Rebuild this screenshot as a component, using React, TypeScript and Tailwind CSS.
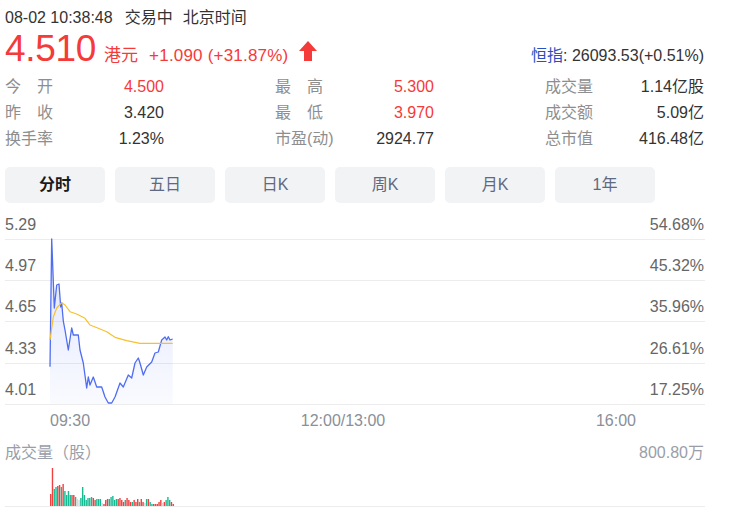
import React from "react";

const RED = "#f53a3a";

const blue: [number, number][] = [
  [50, 366.7], [51.7, 239], [54.3, 308], [56.7, 285], [59, 284], [60.7, 307], [61.7, 303],
  [63.3, 321], [65, 330], [68.3, 350], [71.7, 328], [73.3, 335], [78.3, 335], [80, 350],
  [83.3, 363], [86.7, 388], [88.3, 377], [90, 385], [93.3, 377], [96.7, 387], [101.7, 387],
  [105, 397], [108.3, 403], [111.7, 403], [115, 397], [120, 383], [123.3, 387], [128.3, 375],
  [131.7, 378], [135, 363], [138.3, 358], [140, 363], [143.3, 375], [146.7, 367], [151.7, 362],
  [155, 353], [158.3, 352], [161.7, 340], [165, 337], [166.7, 340], [168.3, 336.7], [170, 340],
  [172.7, 339],
];

const avg: [number, number][] = [
  [50, 340], [53.3, 317], [56.7, 308], [61.7, 302.7], [65, 305], [70, 311.7], [76.7, 314],
  [85, 318.3], [90, 325], [98.3, 328.3], [106.7, 331.7], [115, 337.3], [126.7, 340.7],
  [140, 343.3], [172.7, 343.3],
];

// [height, color] r=red g=green x=gray
const vols: [number, string][] = [
  [12, "r"], [38, "r"], [17, "g"], [19, "g"], [20, "r"], [21, "r"], [19, "g"], [22, "r"],
  [15, "g"], [11, "g"], [15, "g"], [11, "g"], [11, "r"], [11, "r"], [9, "g"], [7, "x"],
  [6, "x"], [8, "g"], [19, "g"], [11, "g"], [6, "g"], [8, "g"], [8, "g"], [9, "g"], [8, "r"],
  [6, "r"], [7, "g"], [7, "g"], [7, "g"], [3, "x"], [2, "r"], [6, "r"], [7, "r"], [7, "g"],
  [9, "g"], [10, "g"], [6, "g"], [7, "g"], [7, "r"], [8, "r"], [6, "r"], [4, "r"], [6, "g"],
  [8, "r"], [6, "r"], [4, "r"], [4, "g"], [6, "r"], [4, "r"], [7, "r"], [4, "g"], [7, "r"],
  [4, "r"], [3, "x"], [7, "g"], [7, "r"], [4, "g"], [2, "g"], [2, "r"], [2, "r"], [2, "r"],
  [4, "r"], [6, "r"], [3, "x"], [4, "r"], [6, "g"], [9, "g"], [6, "g"], [4, "r"], [2, "r"],
];

const colorOf = (c: string) => (c === "r" ? "#f23f3f" : c === "g" ? "#17bb93" : "#d8d8d8");

function Justified({ text }: { text: string }) {
  return (
    <span className="flex w-[48px] justify-between text-[#8e8e8e]">
      {text.split("").map((ch, i) => (
        <span key={i}>{ch}</span>
      ))}
    </span>
  );
}

function Stat({ label, value, red, justify }: { label: string; value: string; red?: boolean; justify?: boolean }) {
  return (
    <div className="flex h-[26px] w-[159px] items-center justify-between">
      {justify ? <Justified text={label} /> : <span className="text-[#8e8e8e]">{label}</span>}
      <span className={red ? "text-[#f53a3a]" : "text-[#333333]"}>{value}</span>
    </div>
  );
}

export default function App() {
  const pts = (a: [number, number][]) => a.map((p) => p.join(",")).join(" ");
  const fill = pts(blue) + " 172.7,404 50,404";
  const tabs = ["分时", "五日", "日K", "周K", "月K", "1年"];
  const rows = [
    ["5.29", "54.68%", "h-[27px]"],
    ["4.97", "45.32%", "h-[41px]"],
    ["4.65", "35.96%", "h-[41px]"],
    ["4.33", "26.61%", "h-[42px]"],
    ["4.01", "17.25%", "h-[41px]"],
  ];
  return (
    <div
      className="w-[748px] h-[519px] overflow-hidden bg-white pl-[5px] text-[16px]"
      style={{ fontFamily: '"Liberation Sans", Arial, "Noto Sans CJK SC", sans-serif' }}
    >
      <div className="w-[700px]">
        {/* line 1 */}
        <div className="mt-[8px] flex h-[20px] items-center leading-[20px] text-[#333333]">
          <span>08-02 10:38:48</span>
          <span className="ml-[12px]">交易中</span>
          <span className="ml-[10px]">北京时间</span>
        </div>
        {/* line 2 */}
        <div className="mt-[1px] flex h-[40px] items-baseline justify-between">
          <div className="flex items-baseline" style={{ color: RED }}>
            <span className="text-[37px] leading-[40px] tracking-[-0.3px]">4.510</span>
            <span className="ml-[8px] text-[17px]">港元</span>
            <span className="ml-[11px] text-[17px] tracking-[0.2px]">+1.090 (+31.87%)</span>
            <svg className="ml-[11px] self-center translate-y-[2px]" width="18" height="20" viewBox="0 0 18 20">
              <path d="M9 0 L18 10 L13 10 L13 20 L5 20 L5 10 L0 10 Z" fill={RED} />
            </svg>
          </div>
          <div className="pr-[1px]">
            <span className="text-[#2a4fc0]">恒指</span>
            <span className="text-[#333333]">: 26093.53(+0.51%)</span>
          </div>
        </div>
        {/* stats */}
        <div className="mt-[5px] flex gap-[111px]">
          <div>
            <Stat label="今开" value="4.500" red justify />
            <Stat label="昨收" value="3.420" justify />
            <Stat label="换手率" value="1.23%" />
          </div>
          <div>
            <Stat label="最高" value="5.300" red justify />
            <Stat label="最低" value="3.970" red justify />
            <Stat label="市盈(动)" value="2924.77" />
          </div>
          <div>
            <Stat label="成交量" value="1.14亿股" />
            <Stat label="成交额" value="5.09亿" />
            <Stat label="总市值" value="416.48亿" />
          </div>
        </div>
        {/* tabs */}
        <div className="mt-[15px] flex gap-[10px]">
          {tabs.map((t, i) => (
            <div
              key={t}
              className={
                "flex h-[36px] w-[100px] items-center justify-center rounded-[5px] bg-[#f2f3f5] " +
                (i === 0 ? "font-bold text-[#1a1a1a]" : "text-[#5d6a82]")
              }
            >
              {t}
            </div>
          ))}
        </div>
        {/* chart */}
        <div className="relative mt-[10px]">
          {rows.map(([l, r, h]) => (
            <div
              key={l}
              className={"flex items-end justify-between border-b border-[#ececec] pb-[5px] leading-[18px] text-[#666666] " + h}
            >
              <span>{l}</span>
              <span className="pr-[1px]">{r}</span>
            </div>
          ))}
          <svg
            className="absolute left-0 top-0"
            width="700"
            height="192"
            viewBox="5 213 700 192"
          >
            <defs>
              <linearGradient id="gf" x1="0" y1="0" x2="0" y2="1">
                <stop offset="0" stopColor="#5470f5" stopOpacity="0.2" />
                <stop offset="1" stopColor="#5470f5" stopOpacity="0.03" />
              </linearGradient>
            </defs>
            <polygon points={fill} fill="url(#gf)" />
            <polyline points={pts(blue)} fill="none" stroke="#4f6df2" strokeWidth="1.3" strokeLinejoin="round" />
            <polyline points={pts(avg)} fill="none" stroke="#f7c02c" strokeWidth="1.2" strokeLinejoin="round" />
          </svg>
        </div>
        {/* x axis */}
        <div className="mt-[7px] flex h-[18px] w-[631px] justify-between pl-[45px] leading-[18px] text-[#8a8f99]">
          <span>09:30</span>
          <span>12:00/13:00</span>
          <span>16:00</span>
        </div>
        {/* volume */}
        <div className="mt-[14px] flex h-[18px] justify-between leading-[18px] text-[#9a9ea8]">
          <span>成交量（股）</span>
          <span className="pr-[1px]">800.80万</span>
        </div>
        <div className="h-[45px] border-b border-[#ececec]">
          <svg width="700" height="44" viewBox="5 462 700 44">
            {vols.map(([h, c], i) => (
              <rect key={i} x={50 + i * 1.776} y={506 - h} width={1.4} height={h} fill={colorOf(c)} />
            ))}
          </svg>
        </div>
      </div>
    </div>
  );
}
